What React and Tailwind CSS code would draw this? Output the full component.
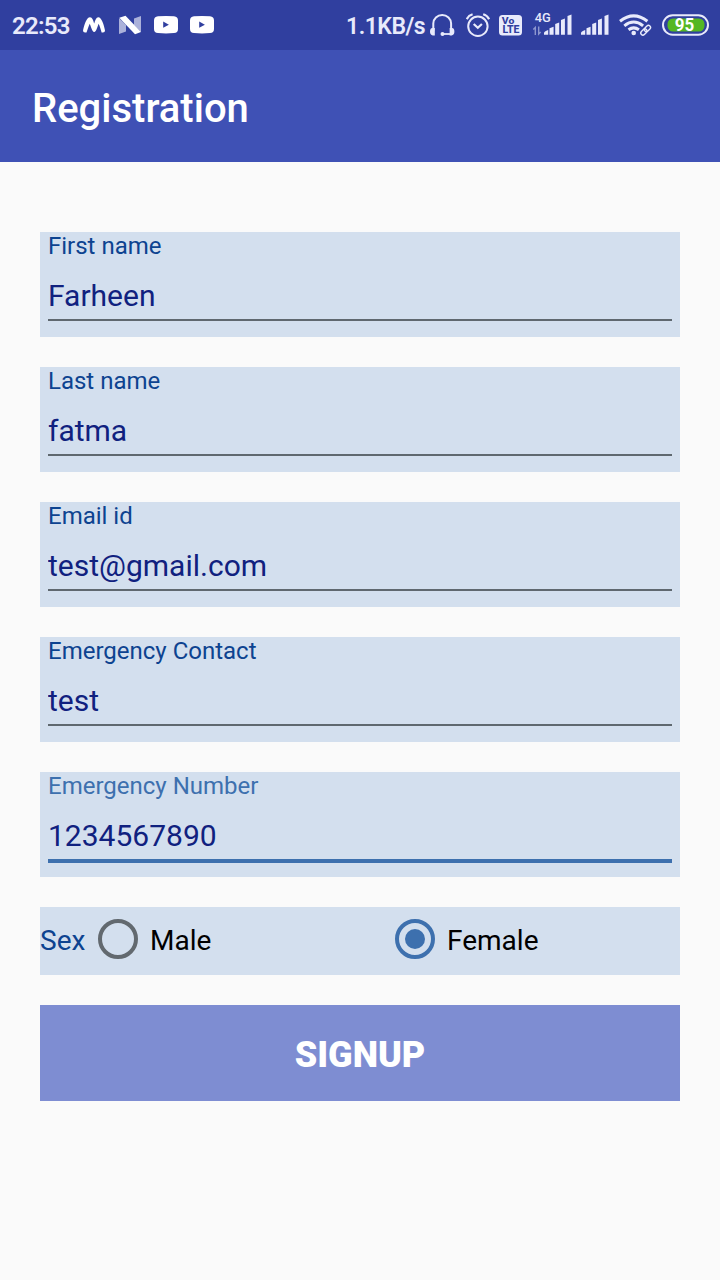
import React, { useState } from "react";

function Monogram() {
  return (
    <svg className="ml-[13px] shrink-0" width="22" height="50" viewBox="83 0 22 50">
      <path d="M83 30.500C84.300 24.500 86.500 17.200 90 17.200C92.300 17.200 93.300 20.500 94.200 23.500C95.200 20.500 96.200 17.200 98.300 17.200C101.500 17.200 104 24.500 105 30.500Q105 32.300 103 32.500H101.600C100.900 29.500 99.800 26.200 98.600 23.800C97.400 26.500 96.500 32 94.200 32C92 32 91 26.500 89.800 23.800C88.500 26.200 87.600 29.500 86.500 32.500H85Q83 32.300 83 30.500Z" fill="#fff" />
    </svg>
  );
}

function Nougat() {
  return (
    <svg className="ml-[14px] shrink-0" width="22" height="50" viewBox="119 0 22 50">
      <path d="M119 18L126 25V31.500L119 34Z" fill="#abb1da" />
      <path d="M134 18.500L141 16V32L134 25Z" fill="#abb1da" />
      <path d="M119.300 17.700L125.500 15.700L141 32L135 34.300Z" fill="#fff" />
    </svg>
  );
}

function Video({ className }) {
  return (
    <svg className={className} width="24" height="50" viewBox="154 0 24 50">
      <path d="M158 16.300Q166 15.700 174 16.300Q178 16.600 178 20.500V29Q178 32.800 174 33.100Q166 33.700 158 33.100Q154 32.800 154 29V20.500Q154 16.600 158 16.300Z" fill="#fff" />
      <path d="M163.200 21.600L168.900 24.700L163.200 27.800Z" fill="#303f9f" />
    </svg>
  );
}

function Headset() {
  return (
    <svg className="shrink-0" width="25" height="50" viewBox="430 0 25 50" fill="none">
      <path d="M433.300 31V23.500A8.900 8.600 0 0 1 451.100 23.500V31" stroke="#e8eafb" strokeWidth="2" />
      <path d="M434.800 28V35.600Q430 35.600 430 31.900Q430 28.300 432.300 28Z" fill="#e8eafb" />
      <path d="M449.600 28V35.600Q454.400 35.600 454.400 31.900Q454.400 28.300 452.100 28Z" fill="#e8eafb" />
      <path d="M442.500 34H451" stroke="#e8eafb" strokeWidth="1.800" />
      <circle cx="442.500" cy="34" r="2" fill="#e8eafb" />
    </svg>
  );
}

function Alarm() {
  return (
    <svg className="ml-[11px] shrink-0" width="24" height="50" viewBox="466 0 24 50" fill="none" stroke="#e8eafb" strokeWidth="2">
      <circle cx="477.900" cy="26.300" r="9.700" />
      <path d="M466.700 19.200Q468.500 15.500 472.600 14.300M489.100 19.200Q487.300 15.500 483.200 14.300" strokeWidth="2.200" />
      <path d="M473.700 24L477.800 27.800L481.900 24" strokeWidth="2.200" />
    </svg>
  );
}

function Volte() {
  return (
    <svg className="ml-[9px] shrink-0" width="23" height="50" viewBox="499 0 23 50">
      <rect x="499" y="15" width="23" height="20.500" rx="3.500" fill="#e8eafb" />
      <text x="501.800" y="24.400" fontSize="9.500" fontWeight="800" fill="#303f9f" textLength="12.500" lengthAdjust="spacingAndGlyphs">Vo</text>
      <text x="502.500" y="33" fontSize="10" fontWeight="800" fill="#303f9f" textLength="17" lengthAdjust="spacingAndGlyphs">LTE</text>
    </svg>
  );
}

function Bars() {
  return <path d="M0 34.800V33Q0 31.500 4.200 30V34.800ZM5.500 34.800V28.300L9.600 26.800V34.800ZM11.200 34.800V23.900L15.200 22.400V34.800ZM17 34.800V20L20.900 18.600V34.800ZM23.500 34.800V16L27.500 14.600V34.800Z" fill="#e8eafb" />;
}

function Signal4G() {
  return (
    <svg className="ml-[11px] shrink-0" width="39" height="50" viewBox="533 0 39 50">
      <text x="534.800" y="21.900" fontSize="12" fontWeight="500" fill="#e8eafb" textLength="16" lengthAdjust="spacingAndGlyphs">4G</text>
      <path d="M535.300 35V27.500L533.300 29.500M538.700 26.500V34L540.700 32" stroke="#8d96ce" strokeWidth="1.400" fill="none" />
      <g transform="translate(544 0)"><Bars /></g>
    </svg>
  );
}

function Signal() {
  return (
    <svg className="ml-[9px] shrink-0" width="28" height="50" viewBox="0 0 28 50">
      <Bars />
    </svg>
  );
}

function Wifi() {
  return (
    <svg className="ml-[10px] shrink-0" width="33" height="50" viewBox="619 0 33 50" fill="none" stroke="#e8eafb">
      <path d="M620 21.300Q633.700 10.500 647.400 21.300" strokeWidth="3" />
      <path d="M624.300 25.800Q633.700 18.300 643.100 25.800" strokeWidth="3" />
      <path d="M628.500 29.800Q633.700 26 638.900 29.800" strokeWidth="3" />
      <circle cx="633.700" cy="33" r="2.300" fill="#e8eafb" stroke="none" />
      <g transform="rotate(-45 646 30)" strokeWidth="1.400">
        <rect x="639.600" y="27.800" width="7" height="4.200" rx="2.100" />
        <rect x="644.600" y="27.800" width="7" height="4.200" rx="2.100" />
      </g>
    </svg>
  );
}

function Battery() {
  return (
    <svg className="ml-[10px] shrink-0" width="47" height="50" viewBox="662 0 47 50">
      <rect x="663" y="15.300" width="45" height="19.400" rx="9.700" fill="none" stroke="#e8eafb" strokeWidth="2" />
      <rect x="667.500" y="18.500" width="37" height="13" rx="5.500" fill="#54b724" />
      <text x="674.700" y="31" fontSize="17.500" fontWeight="700" fill="#fff" textLength="19.500" lengthAdjust="spacingAndGlyphs">95</text>
    </svg>
  );
}

function StatusBar() {
  return (
    <div className="flex h-[50px] items-center bg-[#303f9f] text-[#e8eafb]">
      <span className="ml-3 w-[58px] pt-px text-2xl leading-7 font-semibold tracking-[-0.75px] whitespace-nowrap">22:53</span>
      <Monogram />
      <Nougat />
      <Video className="ml-[13px] shrink-0" />
      <Video className="ml-3 shrink-0" />
      <span className="ml-[132px] w-[84px] pt-1 text-[23px] leading-7 font-semibold tracking-[-0.5px] whitespace-nowrap">1.1KB/s</span>
      <Headset />
      <Alarm />
      <Volte />
      <Signal4G />
      <Signal />
      <Wifi />
      <Battery />
    </div>
  );
}

function Field({ label, initial, active }) {
  const [value, setValue] = useState(initial);
  return (
    <label className="flex h-[105px] flex-col bg-[#d3dfee] px-2">
      <span className={`h-[46px] text-2xl leading-7 ${active ? "text-[#3d70ae]" : "text-[#0d4390]"}`}>{label}</span>
      <input
        value={value}
        onChange={(e) => setValue(e.target.value)}
        className={`w-full bg-transparent text-[30px] leading-[35px] text-[#10217f] outline-none ${active ? "h-[45px] border-b-4 border-[#3d70ae] pb-1.5" : "h-[43px] border-b-2 border-[#5f686f] pb-1.5"}`}
      />
    </label>
  );
}

function Radio({ label, checked, onSelect, className }) {
  return (
    <button type="button" role="radio" aria-checked={checked} onClick={onSelect} className={`flex items-center gap-3 ${className}`}>
      <span className={`mb-1 flex size-10 items-center justify-center rounded-full border-4 ${checked ? "border-[#3d70ae]" : "border-[#62696f]"}`}>
        {checked && <span className="size-5 rounded-full bg-[#3d70ae]" />}
      </span>
      <span className="pb-0.5 text-[28px] leading-[33px] text-black">{label}</span>
    </button>
  );
}

export default function App() {
  const [sex, setSex] = useState("Female");
  return (
    <div className="min-h-screen w-[720px] bg-[#fafafa] font-[Roboto,sans-serif]">
      <StatusBar />
      <header className="flex h-28 items-center bg-[#3f51b5] pt-1 pl-8">
        <h1 className="text-[40px] leading-[47px] font-medium text-white">Registration</h1>
      </header>
      <main className="flex flex-col gap-[30px] px-10 pt-[70px]">
        <Field label="First name" initial="Farheen" />
        <Field label="Last name" initial="fatma" />
        <Field label="Email id" initial="test@gmail.com" />
        <Field label="Emergency Contact" initial="test" />
        <Field label="Emergency Number" initial="1234567890" active />
        <div role="radiogroup" className="flex h-[68px] items-center bg-[#d3dfee]">
          <span className="w-[58px] pb-0.5 text-[28px] leading-[33px] text-[#0d4390]">Sex</span>
          <Radio label="Male" checked={sex === "Male"} onSelect={() => setSex("Male")} className="w-[297px]" />
          <Radio label="Female" checked={sex === "Female"} onSelect={() => setSex("Female")} className="" />
        </div>
        <button type="button" className="h-24 bg-[#7e8dd2] pt-1 text-4xl font-black text-white">SIGNUP</button>
      </main>
    </div>
  );
}
